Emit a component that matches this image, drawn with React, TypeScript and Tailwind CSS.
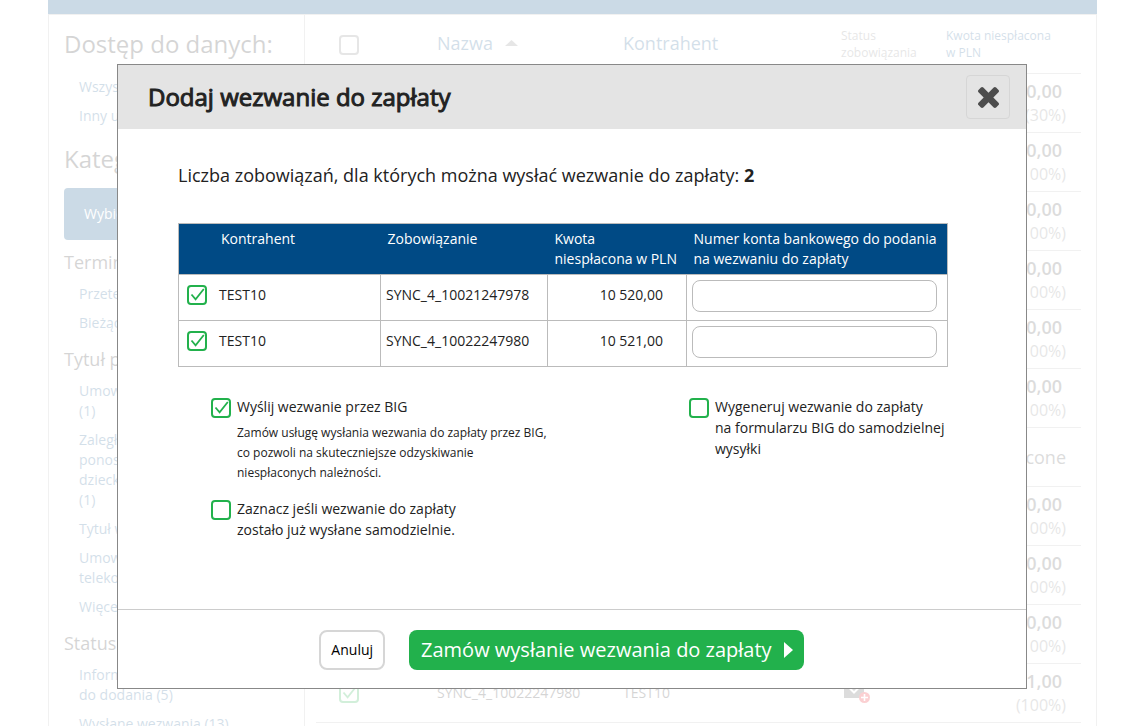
import { useId } from "react";
import type { ReactNode } from "react";
import clsx from "clsx";

const FILTERS = [
  {
    title: "Dostęp do danych:",
    big: true,
    items: [["Wszyscy"], ["Inny użytkownik"]],
  },
  { title: "Kategorie:", big: true, button: "Wybierz kategorię", items: [] },
  { title: "Terminowość", items: [["Przeterminowane"], ["Bieżące"]] },
  {
    title: "Tytuł prawny",
    items: [
      ["Umowa pożyczki", "(1)"],
      ["Zaległości z tytułu", "ponoszenia kosztów", "dziecka", "(1)"],
      ["Tytuł wykonawczy"],
      ["Umowa o usługi", "telekomunikacyjne"],
      ["Więcej"],
    ],
  },
  {
    title: "Status",
    items: [["Informacje", "do dodania (5)"], ["Wysłane wezwania (13)"]],
  },
];

const LIABILITIES = [
  { id: "SYNC_4_10021247971", amount: "10 510,00", note: "(30%)" },
  { id: "SYNC_4_10021247972", amount: "10 510,00", note: "(100%)" },
  { id: "SYNC_4_10021247973", amount: "10 510,00", note: "(100%)" },
  { id: "SYNC_4_10021247974", amount: "10 510,00", note: "(100%)" },
  { id: "SYNC_4_10021247975", amount: "10 510,00", note: "(100%)" },
  { id: "SYNC_4_10021247976", amount: "10 510,00", note: "(100%)" },
  { id: "SYNC_4_10021247977", amount: "", note: "spłacone" },
  { id: "SYNC_4_10021247979", amount: "10 510,00", note: "(100%)" },
  { id: "SYNC_4_10021247981", amount: "10 510,00", note: "(100%)" },
  { id: "SYNC_4_10021247978", amount: "10 520,00", note: "(100%)" },
  { id: "SYNC_4_10022247980", amount: "10 521,00", note: "(100%)" },
];

const SELECTED = [
  { name: "TEST10", id: "SYNC_4_10021247978", amount: "10 520,00" },
  { name: "TEST10", id: "SYNC_4_10022247980", amount: "10 521,00" },
];

type CheckProps = {
  id?: string;
  label?: string;
  checked?: boolean;
  gray?: boolean;
};

function Check({ id, label, checked, gray }: CheckProps) {
  return (
    <span className="grid size-5 shrink-0">
      <input
        type="checkbox"
        id={id}
        aria-label={label}
        defaultChecked={checked}
        className={clsx(
          "peer col-start-1 row-start-1 size-5 appearance-none rounded border-2 bg-white",
          gray ? "border-[#888]" : "border-[#22b14c]"
        )}
      />
      <svg
        viewBox="0 0 20 20"
        className="pointer-events-none invisible col-start-1 row-start-1 size-5 peer-checked:visible"
        fill="none"
        stroke="#22b14c"
        strokeWidth="1.8"
      >
        <path d="M4.5 9.5 8.6 14.3 16.8 4" />
      </svg>
    </span>
  );
}

type OptionProps = {
  label: ReactNode;
  checked?: boolean;
  children?: ReactNode;
};

function Option({ label, checked, children }: OptionProps) {
  const id = useId();
  return (
    <div className="flex items-start gap-1.5">
      <span className="pt-0.5">
        <Check id={id} checked={checked} />
      </span>
      <div>
        <label htmlFor={id} className="block text-sm leading-[21px]">
          {label}
        </label>
        {children}
      </div>
    </div>
  );
}

function Envelope() {
  return (
    <svg width="28" height="22" viewBox="0 0 28 22">
      <rect x="1" y="2" width="20" height="14" fill="#555" />
      <path d="M6 5.5 11 10.5 16 5.5" fill="none" stroke="#fff" strokeWidth="2" />
      <circle cx="21.500" cy="15.500" r="5.500" fill="#ed1c24" />
      <path
        d="M18 15.500h7M21.500 12v7"
        fill="none"
        stroke="#fff"
        strokeWidth="1.600"
      />
    </svg>
  );
}

function Sidebar() {
  return (
    <aside className="w-64 shrink-0 border-r border-[#bbb] pt-[13px] pl-[15px]">
      {FILTERS.map((f) => (
        <section key={f.title} className={f.big ? "mb-[17px]" : "mb-3.5"}>
          <h2
            className={clsx(
              "text-[#333]",
              f.big ? "text-2xl" : "text-lg leading-6"
            )}
          >
            {f.title}
          </h2>
          {f.button && (
            <button className="mt-[13px] -mb-[7px] block h-[52px] w-[220px] rounded bg-[#004a85] pl-5 text-left text-sm text-white">
              {f.button}
            </button>
          )}
          {f.items.length > 0 && (
            <ul
              className={clsx(
                "flex flex-col gap-[9px] pl-[15px] text-sm text-[#2a6596]",
                f.big ? "pt-[17px]" : "pt-2.5"
              )}
            >
              {f.items.map((lines) => (
                <li key={lines[0]}>
                  <a href="#" className="block">
                    {lines.map((l) => (
                      <span key={l} className="block">
                        {l}
                      </span>
                    ))}
                  </a>
                </li>
              ))}
            </ul>
          )}
        </section>
      ))}
    </aside>
  );
}

function LiabilityTable() {
  return (
    <div className="grow pr-[15px] pl-[11px]">
      <table className="w-full table-fixed border-collapse">
        <thead>
          <tr className="h-[58px] border-b border-[#bbb] text-left align-top text-[#2a6596]">
            <th className="w-[121px] pt-5 pl-[23px]">
              <Check label="Zaznacz wszystkie" gray />
            </th>
            <th className="w-[186px] pt-3.5 text-lg font-normal">
              <span className="flex items-center gap-3">
                Nazwa
                <svg width="13" height="6" viewBox="0 0 13 6">
                  <path d="M0 6 6.500 0 13 6z" fill="#888" />
                </svg>
              </span>
            </th>
            <th className="w-[218px] pt-3.5 text-lg font-normal">Kontrahent</th>
            <th className="w-[105px] pt-3 text-xs leading-[17px] font-normal text-[#888]">
              Status
              <br />
              zobowiązania
            </th>
            <th className="pt-3 text-xs leading-[17px] font-normal">
              Kwota niespłacona
              <br />w PLN
            </th>
          </tr>
        </thead>
        <tbody>
          {LIABILITIES.map((row) => (
            <tr
              key={row.id}
              className="h-[59px] border-b border-[#bbb] text-sm text-[#333]"
            >
              <td className="pl-[23px]">
                <Check label={row.id} checked />
              </td>
              <td>{row.id}</td>
              <td>TEST10</td>
              <td className="pl-0.5">
                <Envelope />
              </td>
              <td className="pr-[15px] text-right">
                {row.amount && (
                  <div className="pr-1 text-lg leading-6 font-semibold text-[#555]">
                    {row.amount}
                  </div>
                )}
                <div
                  className={clsx(
                    row.amount
                      ? "text-base leading-6 text-[#888]"
                      : "text-lg text-[#555]"
                  )}
                >
                  {row.note}
                </div>
              </td>
            </tr>
          ))}
        </tbody>
      </table>
    </div>
  );
}

function SelectedTable() {
  return (
    <table className="w-full table-fixed border-collapse border border-[#bbb] text-sm">
      <thead>
        <tr className="h-[51px] bg-[#004a85] text-left align-top text-white">
          <th className="w-[202px] pt-[5px] pl-[42px] font-medium">Kontrahent</th>
          <th className="w-[167px] pt-[5px] pl-[7px] font-medium">Zobowiązanie</th>
          <th className="w-[139px] pt-[5px] pl-[7px] font-medium">
            Kwota
            <br />
            niespłacona w PLN
          </th>
          <th className="pt-[5px] pl-[7px] font-medium">
            Numer konta bankowego do podania
            <br />
            na wezwaniu do zapłaty
          </th>
        </tr>
      </thead>
      <tbody>
        {SELECTED.map((row) => (
          <tr key={row.id} className="h-[46px] align-top">
            <td className="border border-[#bbb] pt-2.5 pl-2">
              <div className="flex items-center gap-3">
                <Check label={row.id} checked />
                {row.name}
              </div>
            </td>
            <td className="border border-[#bbb] pt-2.5 pl-[5px]">{row.id}</td>
            <td className="border border-[#bbb] pt-2.5 pr-[23px] text-right">
              {row.amount}
            </td>
            <td className="border border-[#bbb] pt-[5px] pr-2.5 pl-[5px]">
              <input
                type="text"
                aria-label={`Numer konta bankowego ${row.id}`}
                className="block h-8 w-full rounded-lg border border-[#bbb] px-2"
              />
            </td>
          </tr>
        ))}
      </tbody>
    </table>
  );
}

function SendDemandDialog() {
  return (
    <div
      role="dialog"
      aria-labelledby="dialog-title"
      className="w-full max-w-[910px] border border-[#888] bg-white text-[#222]"
    >
      <header className="flex h-16 items-center justify-between bg-[#e4e4e4] pr-4 pl-[30px]">
        <h1
          id="dialog-title"
          className="text-2xl font-normal [-webkit-text-stroke:1px_#222]"
        >
          Dodaj wezwanie do zapłaty
        </h1>
        <button
          aria-label="Zamknij"
          className="flex size-11 items-center justify-center rounded border border-[#d6d6d6]"
        >
          <svg width="21" height="21" viewBox="302 366 1188 1188" fill="#4d4d4d">
            <path d="M1490 1322q0 40-28 68l-136 136q-28 28-68 28t-68-28l-294-294-294 294q-28 28-68 28t-68-28l-136-136q-28-28-28-68t28-68l294-294-294-294q-28-28-28-68t28-68l136-136q28-28 68-28t68 28l294 294 294-294q28-28 68-28t68 28l136 136q28 28 28 68t-28 68l-294 294 294 294q28 28 28 68z" />
          </svg>
        </button>
      </header>

      <div className="pt-[31px] pr-[78px] pb-[69px] pl-[60px]">
        <p className="mb-[33px] text-lg leading-[30px]">
          Liczba zobowiązań, dla których można wysłać wezwanie do zapłaty:{" "}
          <strong className="font-bold">2</strong>
        </p>
        <SelectedTable />
        <div className="flex justify-between pt-[29px] pl-[33px]">
          <div className="flex flex-col gap-[15px]">
            <Option label="Wyślij wezwanie przez BIG" checked>
              <p className="mt-1.5 text-xs leading-5">
                Zamów usługę wysłania wezwania do zapłaty przez BIG,
                <br />
                co pozwoli na skuteczniejsze odzyskiwanie
                <br />
                niespłaconych należności.
              </p>
            </Option>
            <Option
              label={
                <>
                  Zaznacz jeśli wezwanie do zapłaty
                  <br />
                  zostało już wysłane samodzielnie.
                </>
              }
            />
          </div>
          <div className="w-[259px]">
            <Option
              label={
                <>
                  Wygeneruj wezwanie do zapłaty
                  <br />
                  na formularzu BIG do samodzielnej
                  <br />
                  wysyłki
                </>
              }
            />
          </div>
        </div>
      </div>

      <footer className="flex justify-center gap-6 border-t border-[#ccc] pt-5 pr-[21px] pb-[18px]">
        <button className="h-10 rounded-lg border-2 border-[#d6d6d6] px-2.5 text-sm text-black">
          Anuluj
        </button>
        <button className="flex h-10 items-center gap-3 rounded-lg bg-[#22b14c] pr-[11px] pl-3 text-xl text-white">
          Zamów wysłanie wezwania do zapłaty
          <svg width="9" height="16" viewBox="0 0 9 16" fill="#fff">
            <path d="M0 0 9 8 0 16z" />
          </svg>
        </button>
      </footer>
    </div>
  );
}

export default function App() {
  return (
    <div className="relative h-screen overflow-hidden bg-white font-['Open_Sans',sans-serif]">
      <div className="pl-5 opacity-20">
        <div className="mx-auto max-w-[1049px]">
          <div className="h-3.5 bg-[#004a85]" />
          <main className="flex border border-[#bbb]">
            <Sidebar />
            <LiabilityTable />
          </main>
        </div>
      </div>
      <div className="absolute inset-0 flex items-start justify-center pt-16 pl-[19px]">
        <SendDemandDialog />
      </div>
    </div>
  );
}
